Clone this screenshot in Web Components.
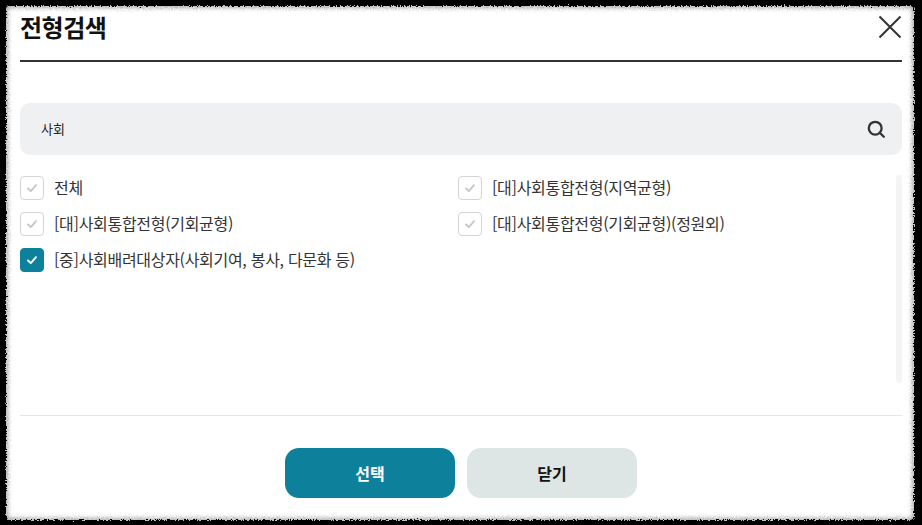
<!DOCTYPE html>
<html lang="ko">
<head>
<meta charset="utf-8">
<title>전형검색</title>
<style>
  html, body { margin: 0; height: 525px; background: #000; overflow: hidden; }
  body { font-family: "Noto Sans CJK KR", "Noto Sans", sans-serif; color: #222; }
</style>
</head>
<body>
<search-dialog heading="전형검색">
  <search-box value="사회"></search-box>
  <check-list>
    <check-item>전체</check-item>
    <check-item>[대]사회통합전형(지역균형)</check-item>
    <check-item>[대]사회통합전형(기회균형)</check-item>
    <check-item>[대]사회통합전형(기회균형)(정원외)</check-item>
    <check-item checked>[중]사회배려대상자(사회기여, 봉사, 다문화 등)</check-item>
  </check-list>
  <action-button slot="actions" primary>선택</action-button>
  <action-button slot="actions">닫기</action-button>
</search-dialog>

<script>
const dialogTemplate = document.createElement("template");
dialogTemplate.innerHTML = `<style>
  :host { display: block; position: relative; width: 908px; height: 514px; margin: 6px 0 0 6px; }
  .paper { position: absolute; inset: 0; background: #fff; border-radius: 4px; box-shadow: inset 0 0 4px 2px #aaa; filter: url(#rough); }
  .filters { position: absolute; width: 0; height: 0; }
  .inner { position: relative; box-sizing: border-box; height: 100%; padding: 0 12px 0 14px; display: flex; flex-direction: column; }
  header { height: 56px; box-sizing: border-box; border-bottom: 2px solid #333; display: flex; justify-content: space-between; align-items: flex-start; flex: none; }
  h1 { margin: 3px 0 0; font-size: 24px; line-height: 36px; font-weight: 700; color: #111; letter-spacing: -0.5px; }
  .close { width: 24px; height: 24px; margin-top: 9px; display: block; }
  .body { flex: none; padding-top: 41px; border-bottom: 1px solid #e5e5e5; height: 312px; }
  .actions { display: flex; justify-content: center; gap: 12px; padding-top: 32px; }
</style>
<div class="paper"></div>
<svg class="filters"><filter id="rough" x="-2%" y="-2%" width="104%" height="104%">
  <feTurbulence type="fractalNoise" baseFrequency="0.7" numOctaves="2" seed="4"/>
  <feDisplacementMap in="SourceGraphic" scale="5" xChannelSelector="R" yChannelSelector="G"/>
</filter></svg>
<div class="inner">
  <header>
    <h1></h1>
    <svg class="close" viewBox="0 0 24 24" fill="none" stroke="#333" stroke-width="2"><path d="M1.5 1.5 22.5 22.5M22.5 1.5 1.5 22.5"/></svg>
  </header>
  <div class="body"><slot></slot></div>
  <div class="actions"><slot name="actions"></slot></div>
</div>`;
class SearchDialog extends HTMLElement {
  constructor() {
    super();
    this.attachShadow({ mode: "open" });
    this.shadowRoot.appendChild(dialogTemplate.content.cloneNode(true));
  }
  connectedCallback() {
    this.shadowRoot.querySelector("h1").textContent = this.getAttribute("heading");
  }
}
customElements.define("search-dialog", SearchDialog);

const boxTemplate = document.createElement("template");
boxTemplate.innerHTML = `<style>
  :host { display: flex; align-items: center; justify-content: space-between; height: 52px; padding: 0 16px 0 21px; background: #eff0f2; border-radius: 10px; font-size: 13px; color: #222; }
  span { padding-bottom: 1px; }
  svg { width: 20px; height: 20px; display: block; }
</style>
<span></span>
<svg viewBox="0 0 20 20" fill="none" stroke="#333" stroke-width="2.3"><circle cx="9.2" cy="9.2" r="6.4"/><path d="m13.8 13.8 4 4" stroke-linecap="round"/></svg>`;
class SearchBox extends HTMLElement {
  constructor() {
    super();
    this.attachShadow({ mode: "open" });
    this.shadowRoot.appendChild(boxTemplate.content.cloneNode(true));
  }
  connectedCallback() {
    this.shadowRoot.querySelector("span").textContent = this.getAttribute("value");
  }
}
customElements.define("search-box", SearchBox);

const listTemplate = document.createElement("template");
listTemplate.innerHTML = `<style>
  :host { display: block; position: relative; height: 208px; margin-top: 20px; }
  .grid { display: grid; grid-template-columns: 438px 1fr; grid-auto-rows: 36px; }
  .bar { position: absolute; top: 0; right: 0; width: 6px; height: 208px; border-radius: 3px; background: #f4f4f5; }
</style>
<div class="grid"><slot></slot></div>
<div class="bar"></div>`;
class CheckList extends HTMLElement {
  constructor() {
    super();
    this.attachShadow({ mode: "open" });
    this.shadowRoot.appendChild(listTemplate.content.cloneNode(true));
  }
}
customElements.define("check-list", CheckList);

const itemTemplate = document.createElement("template");
itemTemplate.innerHTML = `<style>
  :host { display: flex; align-items: center; gap: 10px; height: 26px; font-size: 16px; letter-spacing: -0.3px; color: #333; white-space: nowrap; }
  .mark { width: 24px; height: 24px; box-sizing: border-box; border: 1px solid #d4d4d4; border-radius: 4px; display: flex; align-items: center; justify-content: center; background: #fff; flex: none; }
  .label { padding-bottom: 2px; line-height: 24px; }
  svg { width: 12px; height: 12px; display: block; stroke: #c8c8c8; }
  :host([checked]) .mark { background: #0d819c; border-color: #0d819c; }
  :host([checked]) svg { stroke: #fff; }
</style>
<span class="mark"><svg viewBox="0 0 12 12" fill="none" stroke-width="2" stroke-linecap="round" stroke-linejoin="round"><path d="m2 6.5 2.8 2.6L10 3.2"/></svg></span>
<span class="label"><slot></slot></span>`;
class CheckItem extends HTMLElement {
  constructor() {
    super();
    this.attachShadow({ mode: "open" });
    this.shadowRoot.appendChild(itemTemplate.content.cloneNode(true));
  }
}
customElements.define("check-item", CheckItem);

const buttonTemplate = document.createElement("template");
buttonTemplate.innerHTML = `<style>
  :host { display: flex; align-items: center; justify-content: center; width: 170px; height: 50px; border-radius: 14px; background: #dee5e5; color: #111; font-size: 16px; font-weight: 700; }
  :host([primary]) { background: #0d819c; color: #fff; }
</style>
<slot></slot>`;
class ActionButton extends HTMLElement {
  constructor() {
    super();
    this.attachShadow({ mode: "open" });
    this.shadowRoot.appendChild(buttonTemplate.content.cloneNode(true));
  }
}
customElements.define("action-button", ActionButton);
</script>
</body>
</html>
